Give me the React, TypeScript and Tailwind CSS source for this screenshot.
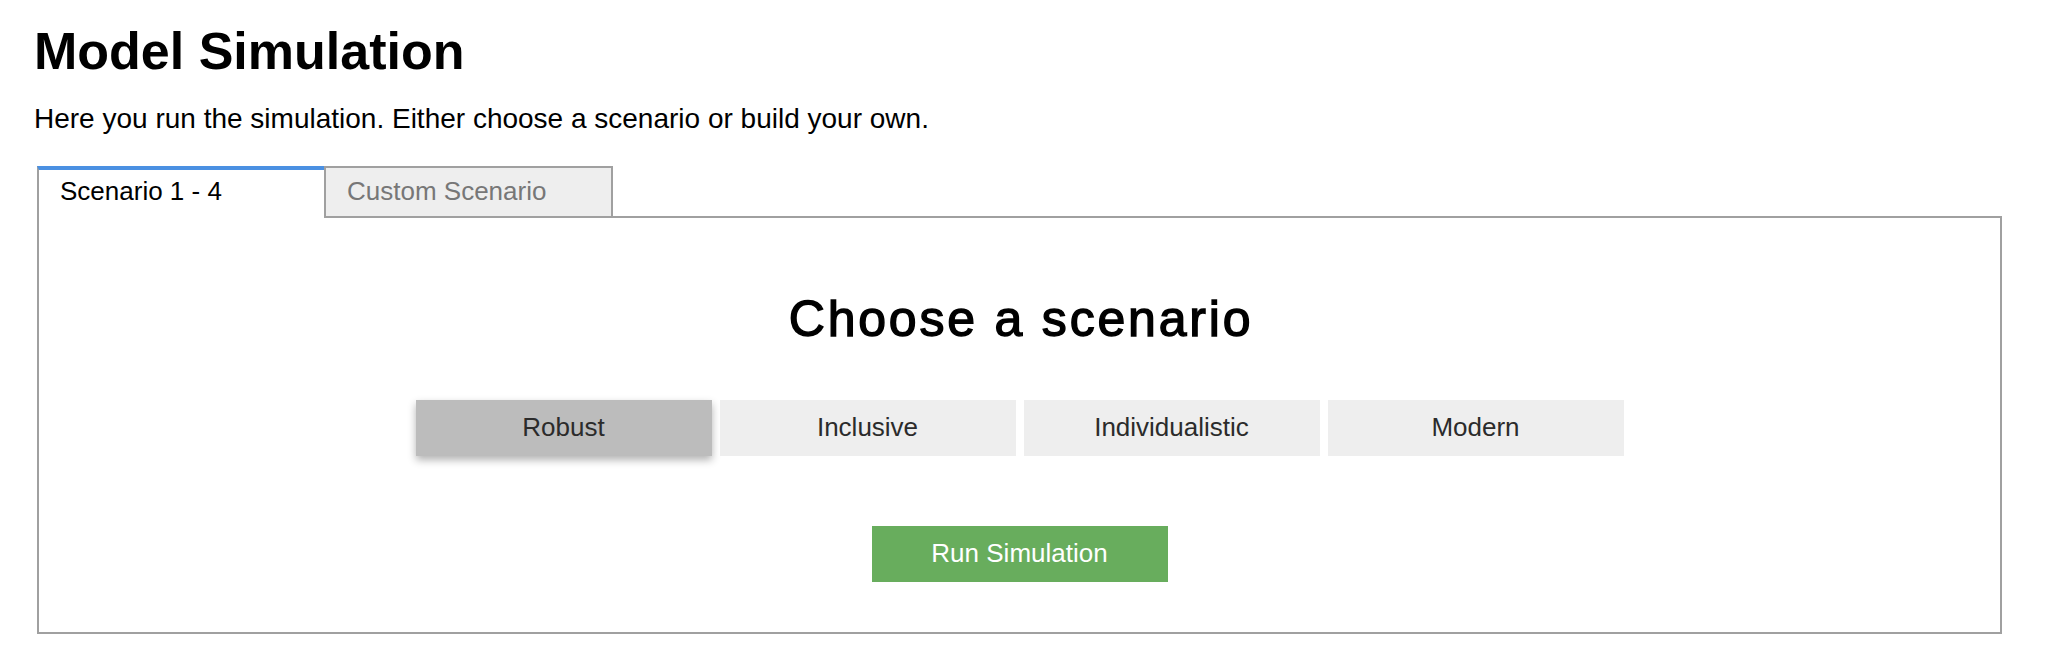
import React from "react";

const scenarios = ["Robust", "Inclusive", "Individualistic", "Modern"];

export default function App() {
  const [active, setActive] = React.useState(0);
  return (
    <div className="min-h-[650px] bg-white text-black font-['Liberation_Sans',Arial,sans-serif]">
      <div className="pl-[34px] w-[2002px]">
        <h1 className="mt-0 pt-[25px] text-[52px] leading-[52px] font-bold">Model Simulation</h1>
        <p className="mt-[28px] text-[28px] leading-[28px]">
          Here you run the simulation. Either choose a scenario or build your own.
        </p>

        <div className="ml-[3px] mt-[33px] flex relative z-10">
          <button className="w-[287px] h-[52px] bg-white border-t-4 border-t-[#4a90e2] border-l-2 border-l-[#a0a0a0] text-left pl-[21px] pt-[8px] flex items-start text-[26px] leading-[26px] text-black">
            Scenario 1 - 4
          </button>
          <button className="w-[289px] h-[52px] bg-[#eeeeee] border-2 border-[#a0a0a0] text-left pl-[21px] pt-[10px] flex items-start text-[26px] leading-[26px] text-[#777777]">
            Custom Scenario
          </button>
        </div>

        <div className="ml-[3px] -mt-[2px] h-[418px] border-2 border-[#a0a0a0] flex flex-col items-center">
          <h2 className="mt-[76px] text-[50px] leading-[50px] font-normal tracking-[2.8px] [-webkit-text-stroke:1.4px_black] pl-[3px]">
            Choose a scenario
          </h2>
          <div className="mt-[56px] flex gap-[8px]">
            {scenarios.map((s, i) => (
              <button
                key={s}
                onClick={() => setActive(i)}
                className={
                  i === active
                    ? "w-[296px] h-[56px] bg-[#bcbcbc] text-[#2b2b2b] text-[26px] leading-[26px] flex items-center justify-center pb-[3px] shadow-[0_4px_8px_rgba(0,0,0,0.3)]"
                    : "w-[296px] h-[56px] bg-[#eeeeee] text-[#2b2b2b] text-[26px] leading-[26px] flex items-center justify-center pb-[3px]"
                }
              >
                {s}
              </button>
            ))}
          </div>
          <button className="mt-[70px] w-[296px] h-[56px] bg-[#68ad5d] text-white text-[26px] leading-[26px] flex items-center justify-center pb-[3px]">
            Run Simulation
          </button>
        </div>
      </div>
    </div>
  );
}
